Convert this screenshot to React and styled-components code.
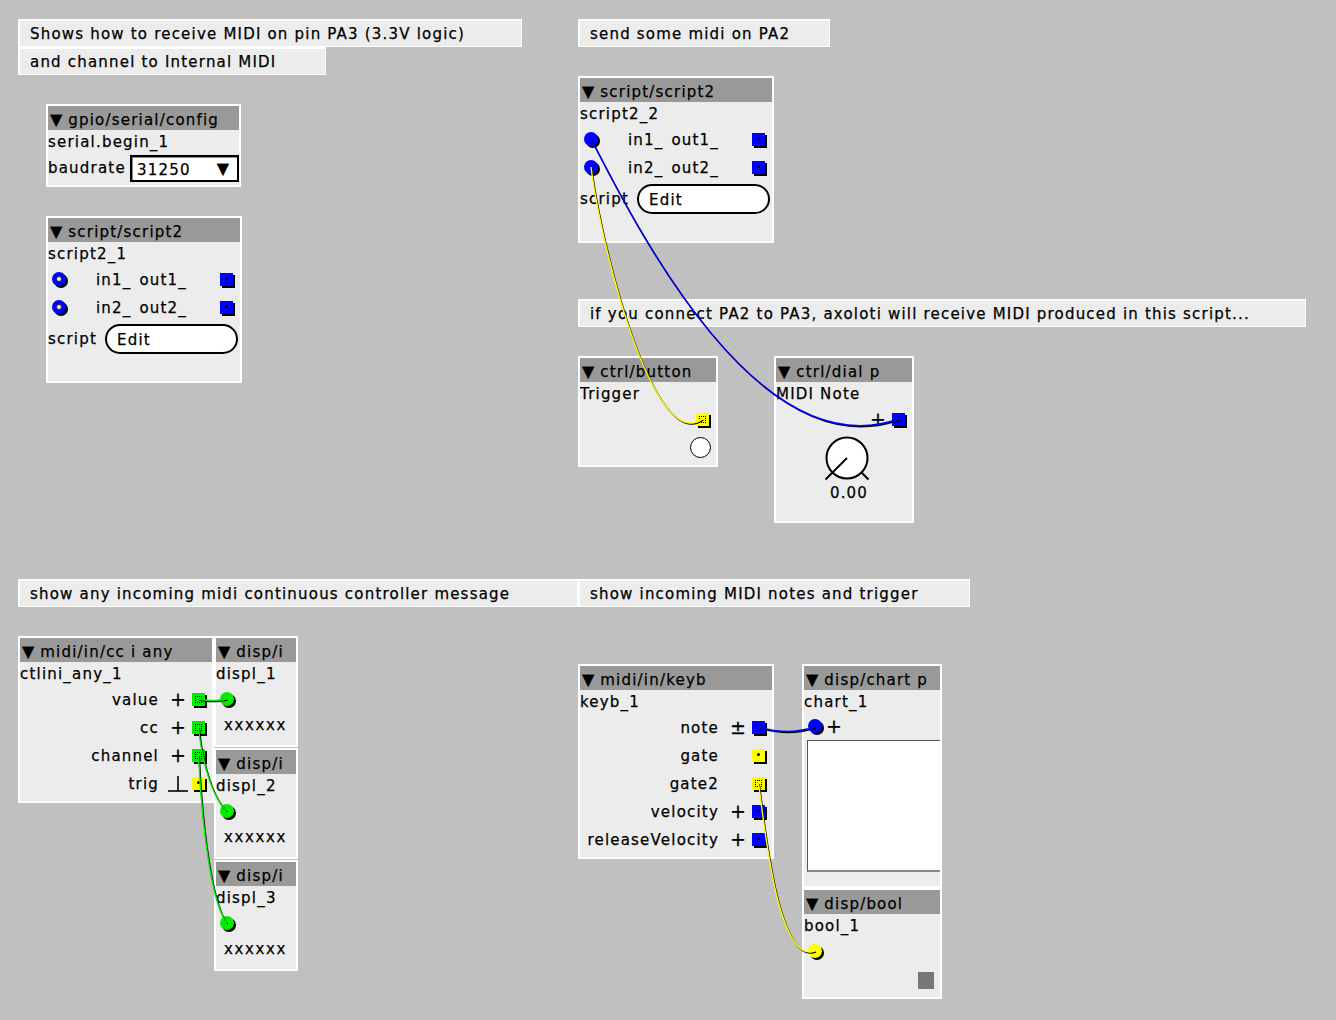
import React from "react";
import styled, { createGlobalStyle } from "styled-components";

const GlobalStyle = createGlobalStyle`
  html, body { margin: 0; padding: 0; background: #c0c0c0; }
  body { font-family: "DejaVu Sans", "Liberation Sans", sans-serif; }
`;

const Canvas = styled.div`
  position: relative;
  width: 1336px;
  height: 1020px;
  overflow: hidden;
  background: #c0c0c0;
  font-family: "DejaVu Sans", "Liberation Sans", sans-serif;
  font-size: 15px;
  letter-spacing: 1.2px;
  color: #000;
  -webkit-text-stroke: 0.25px #000;
`;

const Comment = styled.div`
  position: absolute;
  left: ${(p) => p.$x}px;
  top: ${(p) => p.$y}px;
  width: ${(p) => p.$w}px;
  height: 28px;
  box-sizing: border-box;
  border: 1px solid #fff;
  border-top-width: 2px;
  border-left-width: 2px;
  background: #ececec;
  padding-left: 10px;
  display: flex;
  align-items: center;
  white-space: nowrap;
`;

const Obj = styled.div`
  position: absolute;
  left: ${(p) => p.$x}px;
  top: ${(p) => p.$y}px;
  width: ${(p) => p.$w}px;
  height: ${(p) => p.$h}px;
  box-sizing: border-box;
  border: 2px solid #fff;
  background: #ececec;
  display: flex;
  flex-direction: column;
  overflow: hidden;
`;

const Header = styled.div`
  flex: none;
  height: 24px;
  box-sizing: border-box;
  background: #999999;
  display: flex;
  align-items: center;
  padding: 3px 0 0 2px;
  white-space: nowrap;
`;

const Tri = styled.span`
  font-size: 16px;
  letter-spacing: 0;
  margin-right: 6px;
`;

const NameRow = styled.div`
  flex: none;
  height: 24px;
  display: flex;
  align-items: center;
  white-space: nowrap;
`;

const Row = styled.div`
  flex: none;
  height: ${(p) => p.$h || 28}px;
  display: flex;
  align-items: center;
  justify-content: ${(p) => p.$justify || "flex-start"};
  white-space: nowrap;
`;

const InLabel = styled.span`
  margin-left: 6px;
`;

const OutLabel = styled.span`
  margin-left: auto;
  margin-right: 7px;
`;

const Slot = styled.span`
  flex: none;
  width: 24px;
  display: flex;
  align-items: center;
  justify-content: center;
  letter-spacing: 0;
  font-size: 19px;
  margin-top: -2px;
`;

const OutSquare = styled.span`
  flex: none;
  position: relative;
  width: 13px;
  height: 13px;
  margin: -2px 7px 0 2px;
  background: ${(p) => p.$c};
  box-shadow: 2px 2px 0 #000;
`;

const PortDot = styled.span`
  position: absolute;
  left: 5px;
  top: 4px;
  width: 3px;
  height: 3px;
  border-radius: 50%;
  background: #000;
`;

const PortDash = styled.span`
  position: absolute;
  left: 3px;
  top: 3px;
  width: 7px;
  height: 7px;
  box-sizing: border-box;
  border: 1px dotted #000;
`;

const InDot = styled.span`
  flex: none;
  position: relative;
  width: 14px;
  height: 14px;
  margin: -2px 0 0 4px;
  border-radius: 50%;
  background: ${(p) => p.$c};
  box-shadow: 2px 2px 0 #000;
`;

const RingHole = styled.span`
  position: absolute;
  left: 4px;
  top: 4px;
  width: 6px;
  height: 6px;
  box-sizing: border-box;
  border-radius: 50%;
  background: #fff;
  border: 1px solid #222;
`;

const Dropdown = styled.div`
  margin-left: auto;
  width: 109px;
  height: 27px;
  box-sizing: border-box;
  border: 2px solid #000;
  box-shadow: inset 1px 1px 0 #888;
  background: #fff;
  display: flex;
  align-items: center;
  justify-content: space-between;
  padding: 3px 8px 0 5px;
`;

const DropArrow = styled.span`
  font-size: 16px;
  letter-spacing: 0;
  margin-top: -3px;
`;

const EditButton = styled.div`
  margin-left: auto;
  margin-right: 2px;
  width: 133px;
  height: 30px;
  box-sizing: border-box;
  border: 2px solid #000;
  border-radius: 15px;
  background: #fff;
  display: flex;
  align-items: center;
  padding: 1px 0 0 10px;
`;

const PushButton = styled.div`
  width: 21px;
  height: 21px;
  box-sizing: border-box;
  margin-right: 5px;
  border: 1.5px solid #000;
  border-radius: 50%;
  background: #fff;
`;

const DialBox = styled.div`
  flex: none;
  display: flex;
  flex-direction: column;
  align-items: center;
  padding-left: 5px;
`;

const DialValue = styled.div`
  height: 22px;
  display: flex;
  align-items: center;
  padding-left: 5px;
`;

const ValueText = styled.div`
  flex: none;
  height: 22px;
  display: flex;
  align-items: center;
  padding-left: 8px;
  letter-spacing: 1.6px;
`;

const ChartArea = styled.div`
  flex: none;
  width: 133px;
  height: 132px;
  margin-left: 3px;
  box-sizing: border-box;
  background: #fff;
  border-top: 1px solid #555;
  border-left: 1px solid #555;
  border-bottom: 2px solid #888;
`;

const Led = styled.span`
  width: 16px;
  height: 17px;
  margin: 4px 6px 0 0;
  background: #777;
`;

const WireLayer = styled.svg`
  position: absolute;
  left: 0;
  top: 0;
  pointer-events: none;
`;

const BLUE = "#0000ff";
const YELLOW = "#ffff00";
const GREEN = "#00ee00";

function Title({ children }) {
  return (
    <Header>
      <Tri>▼</Tri>
      {children}
    </Header>
  );
}

function Outlet({ label, ind, c, connected }) {
  return (
    <>
      <OutLabel>{label}</OutLabel>
      <Slot>{ind}</Slot>
      <OutSquare $c={c}>{connected ? <PortDash /> : <PortDot />}</OutSquare>
    </>
  );
}

function TrigGlyph() {
  return (
    <svg width="20" height="20" viewBox="0 0 20 20">
      <line x1="10" y1="3" x2="10" y2="18" stroke="#000" strokeWidth="1.6" />
      <line x1="0" y1="18" x2="20" y2="18" stroke="#000" strokeWidth="1.6" />
    </svg>
  );
}

function Dial() {
  return (
    <svg width="60" height="48" viewBox="0 0 60 48">
      <circle cx="30" cy="24" r="20.5" fill="#fff" stroke="#000" strokeWidth="2" />
      <line x1="30" y1="24" x2="8.5" y2="45.5" stroke="#000" strokeWidth="2" />
      <line x1="44.5" y1="38.5" x2="51.5" y2="45.5" stroke="#000" strokeWidth="2" />
    </svg>
  );
}

function Wire({ d, c }) {
  return (
    <>
      <path d={d} fill="none" stroke="#000" strokeWidth="1.4" transform="translate(0.8,1)" />
      <path d={d} fill="none" stroke={c} strokeWidth="1.4" />
    </>
  );
}

function Script2({ x, y, name, connected }) {
  const inlet = connected ? (
    <InDot $c={BLUE} />
  ) : (
    <InDot $c={BLUE}>
      <RingHole />
    </InDot>
  );
  return (
    <Obj $x={x} $y={y} $w={196} $h={167}>
      <Title>script/script2</Title>
      <NameRow>{name}</NameRow>
      <Row>
        {inlet}
        <Slot />
        <InLabel>in1_</InLabel>
        <Outlet label="out1_" c={BLUE} />
      </Row>
      <Row>
        {inlet}
        <Slot />
        <InLabel>in2_</InLabel>
        <Outlet label="out2_" c={BLUE} />
      </Row>
      <Row $h={34}>
        <span>script</span>
        <EditButton>Edit</EditButton>
      </Row>
    </Obj>
  );
}

function DispI({ y, name }) {
  return (
    <Obj $x={214} $y={y} $w={84} $h={111}>
      <Title>disp/i</Title>
      <NameRow>{name}</NameRow>
      <Row>
        <InDot $c={GREEN} />
      </Row>
      <ValueText>xxxxxx</ValueText>
    </Obj>
  );
}

export default function App() {
  return (
    <Canvas>
      <GlobalStyle />

      <Comment $x={18} $y={19} $w={504}>Shows how to receive MIDI on pin PA3 (3.3V logic)</Comment>
      <Comment $x={18} $y={47} $w={308}>and channel to Internal MIDI</Comment>
      <Comment $x={578} $y={19} $w={252}>send some midi on PA2</Comment>
      <Comment $x={578} $y={299} $w={728}>if you connect PA2 to PA3, axoloti will receive MIDI produced in this script...</Comment>
      <Comment $x={18} $y={579} $w={560}>show any incoming midi continuous controller message</Comment>
      <Comment $x={578} $y={579} $w={392}>show incoming MIDI notes and trigger</Comment>

      <Obj $x={46} $y={104} $w={195} $h={83}>
        <Title>gpio/serial/config</Title>
        <NameRow>serial.begin_1</NameRow>
        <Row>
          <span>baudrate</span>
          <Dropdown>
            <span>31250</span>
            <DropArrow>▼</DropArrow>
          </Dropdown>
        </Row>
      </Obj>

      <Script2 x={46} y={216} name="script2_1" />
      <Script2 x={578} y={76} name="script2_2" connected />

      <Obj $x={578} $y={356} $w={140} $h={111}>
        <Title>ctrl/button</Title>
        <NameRow>Trigger</NameRow>
        <Row>
          <Outlet label="" c={YELLOW} connected />
        </Row>
        <Row $h={26} $justify="flex-end">
          <PushButton />
        </Row>
      </Obj>

      <Obj $x={774} $y={356} $w={140} $h={167}>
        <Title>ctrl/dial p</Title>
        <NameRow>MIDI Note</NameRow>
        <Row>
          <Outlet label="" ind="+" c={BLUE} connected />
        </Row>
        <DialBox>
          <Dial />
          <DialValue>0.00</DialValue>
        </DialBox>
      </Obj>

      <Obj $x={18} $y={636} $w={196} $h={167}>
        <Title>midi/in/cc i any</Title>
        <NameRow>ctlini_any_1</NameRow>
        <Row>
          <Outlet label="value" ind="+" c={GREEN} connected />
        </Row>
        <Row>
          <Outlet label="cc" ind="+" c={GREEN} connected />
        </Row>
        <Row>
          <Outlet label="channel" ind="+" c={GREEN} connected />
        </Row>
        <Row>
          <Outlet label="trig" ind={<TrigGlyph />} c={YELLOW} />
        </Row>
      </Obj>

      <DispI y={636} name="displ_1" />
      <DispI y={748} name="displ_2" />
      <DispI y={860} name="displ_3" />

      <Obj $x={578} $y={664} $w={196} $h={195}>
        <Title>midi/in/keyb</Title>
        <NameRow>keyb_1</NameRow>
        <Row>
          <Outlet label="note" ind="±" c={BLUE} connected />
        </Row>
        <Row>
          <Outlet label="gate" c={YELLOW} />
        </Row>
        <Row>
          <Outlet label="gate2" c={YELLOW} connected />
        </Row>
        <Row>
          <Outlet label="velocity" ind="+" c={BLUE} />
        </Row>
        <Row>
          <Outlet label="releaseVelocity" ind="+" c={BLUE} />
        </Row>
      </Obj>

      <Obj $x={802} $y={664} $w={140} $h={224}>
        <Title>disp/chart p</Title>
        <NameRow>chart_1</NameRow>
        <Row $h={26}>
          <InDot $c={BLUE} />
          <Slot>+</Slot>
        </Row>
        <ChartArea />
      </Obj>

      <Obj $x={802} $y={888} $w={140} $h={111}>
        <Title>disp/bool</Title>
        <NameRow>bool_1</NameRow>
        <Row>
          <InDot $c={YELLOW} />
        </Row>
        <Row $h={24} $justify="flex-end">
          <Led />
        </Row>
      </Obj>

      <WireLayer width="1336" height="1020" viewBox="0 0 1336 1020">
        <Wire c={BLUE} d="M 898.5 419 C 760 468, 640 235, 591 139" />
        <Wire c={YELLOW} d="M 702.5 419 C 652 455, 600 240, 591 167" />
        <Wire c={GREEN} d="M 198.5 699 C 210 701, 215 701, 227 699" />
        <Wire c={GREEN} d="M 198.5 727 C 202 765, 214 800, 227 811" />
        <Wire c={GREEN} d="M 198.5 755 C 202 830, 212 905, 227 923" />
        <Wire c={BLUE} d="M 758.5 727 C 780 733, 795 733, 815 727" />
        <Wire c={YELLOW} d="M 758.5 783 C 765 830, 778 965, 815 951" />
      </WireLayer>
    </Canvas>
  );
}
